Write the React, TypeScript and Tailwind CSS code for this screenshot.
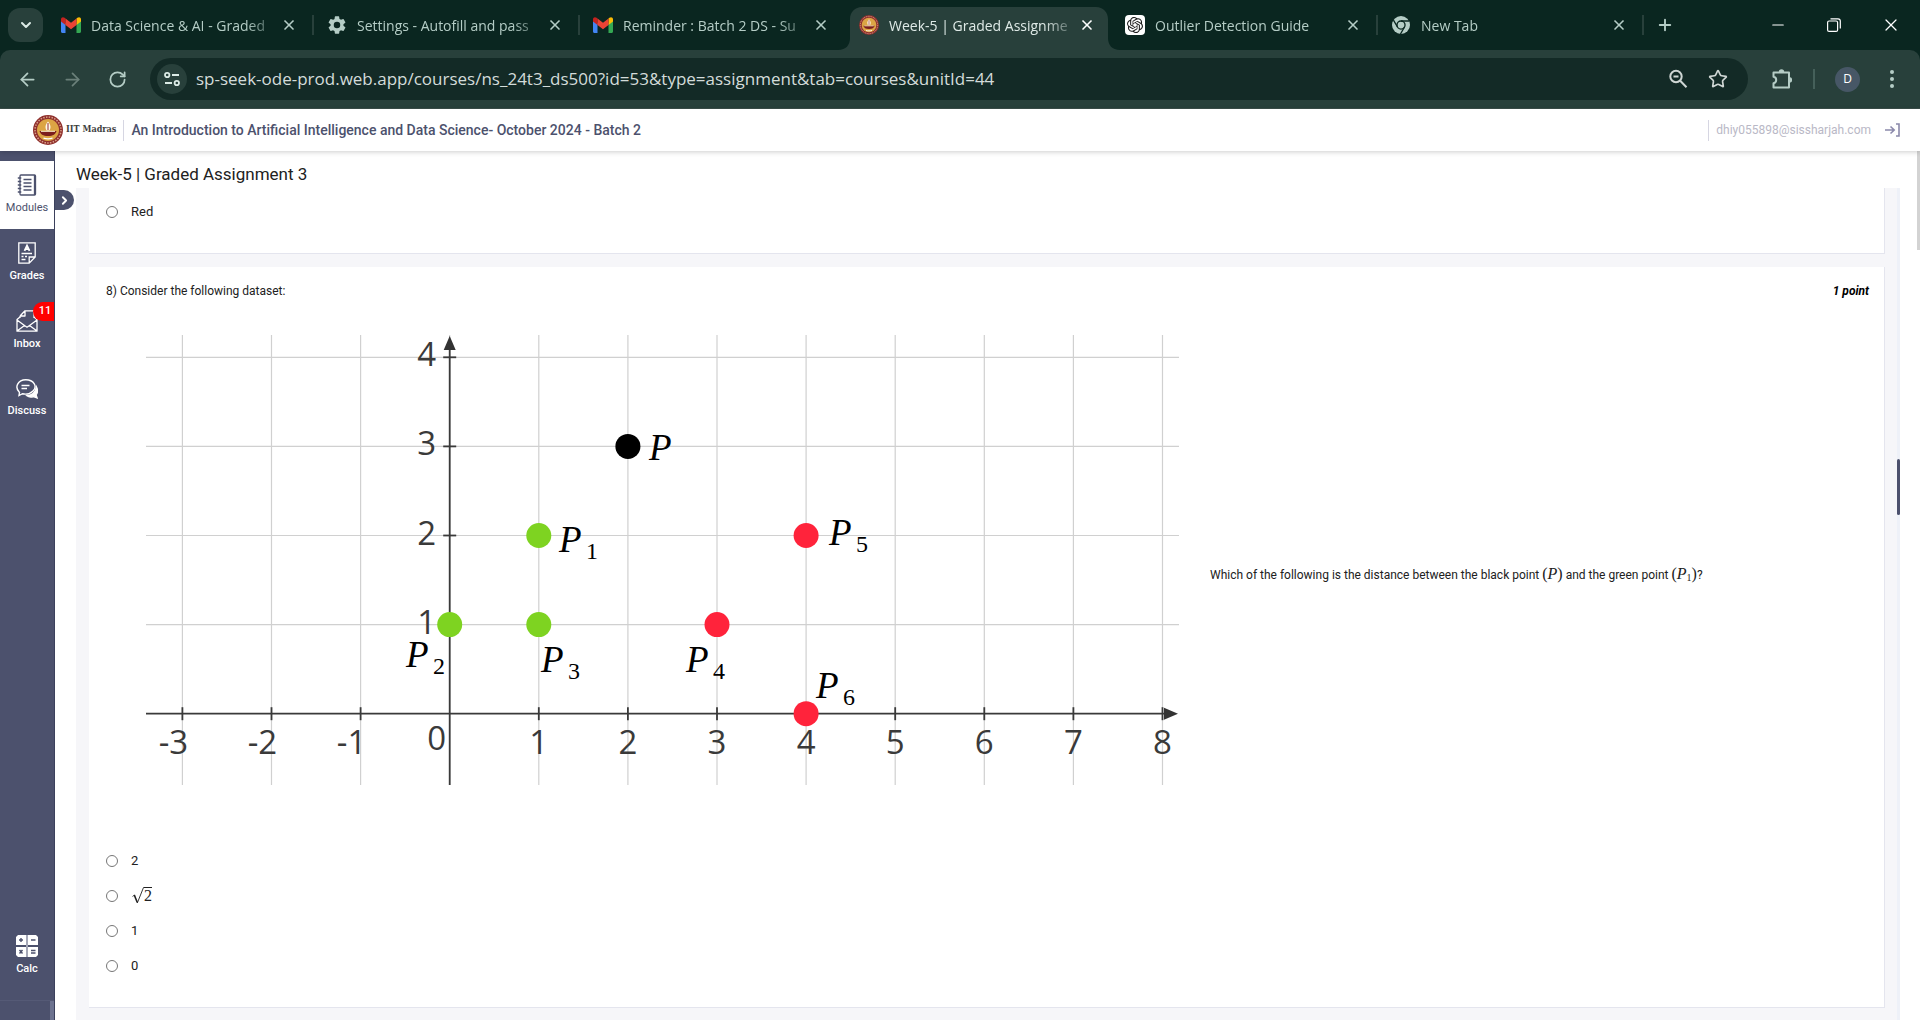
import { ReactNode } from 'react';
import { ArrowLeft, ArrowRight, ChevronDown, ChevronRight, Minus, Plus, RotateCw, Star, X } from 'lucide-react';
import { SiOpenai } from 'react-icons/si';

const GRID_X = [-3, -2, -1, 0, 1, 2, 3, 4, 5, 6, 7, 8];
const GRID_Y = [1, 2, 3, 4];
const UNIT = 89.1;

// plot units -> svg units
const px = (x: number) => 303.7 + x * UNIT;
const py = (y: number) => 379.7 - y * UNIT;

const POINTS = [
  { name: 'P', sub: '', x: 2, y: 3, color: '#000000', lx: 503, ly: 126 },
  { name: 'P', sub: '1', x: 1, y: 2, color: '#7ed321', lx: 413, ly: 218 },
  { name: 'P', sub: '2', x: 0, y: 1, color: '#7ed321', lx: 260, ly: 333 },
  { name: 'P', sub: '3', x: 1, y: 1, color: '#7ed321', lx: 395, ly: 338 },
  { name: 'P', sub: '4', x: 3, y: 1, color: '#ff233b', lx: 540, ly: 338 },
  { name: 'P', sub: '5', x: 4, y: 2, color: '#ff233b', lx: 683, ly: 211 },
  { name: 'P', sub: '6', x: 4, y: 0, color: '#ff233b', lx: 670, ly: 364 },
];

function GmailIcon() {
  return (
    <svg viewBox="0 0 20 16" className="h-4 w-5">
      <path d="M0 2v12.500c0 .8.6 1.500 1.500 1.500H4.500V6z" fill="#4285f4" />
      <path d="M20 2v12.500c0 .8-.6 1.500-1.500 1.500H15.500V6z" fill="#34a853" />
      <path d="M15.500 1.500V8L20 4.500V2.200C20 .2 17.800-.5 16.400.8z" fill="#fbbc04" />
      <path d="M4.500 1.500V8L0 4.500V2.200C0 .2 2.200-.5 3.600.8z" fill="#c5221f" />
      <path d="M4.500 8V1.500L10 5.800l5.500-4.300V8L10 12.200z" fill="#ea4335" />
    </svg>
  );
}

function GearIcon() {
  return (
    <svg viewBox="2 2 20 20" className="size-[18px]" fill="#b5cdc6">
      <path d="M19.140 12.940c.04-.3.060-.61.060-.94s-.02-.64-.07-.94l2.030-1.580a.49.49 0 0 0 .12-.61l-1.920-3.320a.49.49 0 0 0-.59-.22l-2.390.96a7 7 0 0 0-1.620-.94l-.36-2.540a.48.48 0 0 0-.48-.41h-3.840a.47.47 0 0 0-.47.41l-.36 2.540a7.300 7.300 0 0 0-1.620.94l-2.390-.96a.47.47 0 0 0-.59.22L2.740 8.870a.47.47 0 0 0 .12.61l2.030 1.580a6.500 6.500 0 0 0 0 1.880l-2.030 1.580a.49.49 0 0 0-.12.61l1.920 3.320c.12.22.37.29.59.22l2.390-.96c.5.380 1.030.7 1.620.94l.36 2.540c.05.24.24.41.48.41h3.840c.24 0 .44-.17.47-.41l.36-2.540a7 7 0 0 0 1.620-.94l2.390.96c.22.080.47 0 .59-.22l1.920-3.320a.47.47 0 0 0-.12-.61zM12 15.600a3.600 3.600 0 1 1 0-7.200 3.600 3.600 0 0 1 0 7.200z" />
    </svg>
  );
}

function ChromeIcon() {
  return (
    <svg viewBox="0 0 20 20" className="size-[18px]">
      <circle cx="10" cy="10" r="10" fill="#b5cdc6" />
      <circle cx="10" cy="10" r="4.500" fill="none" stroke="#0a2620" strokeWidth="1.500" />
      <path d="M10 5.500h9M6.100 12.200L1.600 4.500M13.900 12.200l-4.500 7.800" stroke="#0a2620" strokeWidth="1.500" />
    </svg>
  );
}

function CrestIcon({ className }: { className: string }) {
  return (
    <svg viewBox="0 0 30 30" className={className}>
      <circle cx="15" cy="15" r="15" fill="#8f2f2c" />
      <circle cx="15" cy="15" r="13" fill="none" stroke="#d8a08a" strokeWidth="1.500" strokeDasharray="1.500 1.300" />
      <circle cx="15" cy="15" r="11" fill="#dca544" />
      <path d="M15 6.500c1.800 2 2.500 4 2.500 5.500s-.6 2.500-1 3.500h-3c-.4-1-1-2-1-3.500s.7-3.500 2.500-5.500z" fill="#fff8ea" />
      <path d="M14.500 8h1v7h-1z" fill="#8f2f2c" />
      <path d="M6.500 16h17c-.7 3-3.500 5-8.500 5s-7.800-2-8.500-5z" fill="#7c1f1d" />
      <path d="M8 16.300h14" stroke="#f3e3c0" strokeWidth="1.200" />
      <path d="M10.500 23.200c3 .8 6 .8 9 0" stroke="#fff" strokeWidth="1.300" fill="none" />
    </svg>
  );
}

function OpenAiIcon() {
  return (
    <span className="flex size-5 items-center justify-center rounded bg-white text-[#1c1c1c]">
      <SiOpenai size={16} />
    </span>
  );
}

const TABS: { title: string; icon: ReactNode; active?: boolean }[] = [
  { title: 'Data Science & AI - Graded', icon: <GmailIcon /> },
  { title: 'Settings - Autofill and pass', icon: <GearIcon /> },
  { title: 'Reminder : Batch 2 DS - Su', icon: <GmailIcon /> },
  { title: 'Week-5 | Graded Assignme', icon: <CrestIcon className="size-5" />, active: true },
  { title: 'Outlier Detection Guide', icon: <OpenAiIcon /> },
  { title: 'New Tab', icon: <ChromeIcon /> },
];

function TabStrip() {
  return (
    <div className="flex h-[50px] items-center bg-[#0a2620] pl-2 font-['Open_Sans','Noto_Sans',sans-serif] text-[#b5cdc6]">
      <button aria-label="Search tabs" className="mr-[5px] flex h-[34px] w-[35px] shrink-0 items-center justify-center rounded-xl bg-[#28403b] text-[#dcebe6]">
        <ChevronDown size={16} strokeWidth={3} />
      </button>
      {TABS.map((tab, i) => (
        <div key={tab.title} className="relative h-[50px] w-[266px] min-w-0">
          {tab.active && (
            <svg viewBox="0 0 282 43" preserveAspectRatio="none" className="absolute -left-2 bottom-0 h-[43px] w-[282px]" fill="#28403b">
              <path d="M0 43c8 0 12-5 12-12V12C12 5 17 0 24 0h234c7 0 12 5 12 12v19c0 7 4 12 12 12z" />
            </svg>
          )}
          <div className="relative flex h-full items-center pr-[17px] pl-[13px]">
            <span className="flex w-5 shrink-0 justify-center">{tab.icon}</span>
            <span
              className={
                'ml-[10px] flex-1 overflow-hidden text-[14px] whitespace-nowrap [mask-image:linear-gradient(to_right,black_155px,transparent_190px)] ' +
                (tab.active ? 'text-[#dfeae7]' : '')
              }
            >
              {tab.title}
            </span>
            <button aria-label="Close tab" className={'ml-3 shrink-0 ' + (tab.active ? 'text-white' : '')}>
              <X size={16} strokeWidth={2.5} />
            </button>
          </div>
          {i !== 2 && i !== 3 && <span className="absolute top-[15px] right-0 h-5 w-0.5 bg-[#28403b]" />}
        </div>
      ))}
      <button aria-label="New tab" className="ml-3 shrink-0">
        <Plus size={18} strokeWidth={2.5} />
      </button>
      <div className="ml-auto flex shrink-0 items-center text-white">
        <button aria-label="Minimize" className="flex w-14 justify-center">
          <Minus size={18} strokeWidth={1.5} />
        </button>
        <button aria-label="Restore" className="flex w-14 justify-center">
          <svg viewBox="0 0 14 14" className="size-[14px]" fill="none" stroke="currentColor" strokeWidth="1.200">
            <rect x="0.600" y="3" width="10" height="10.400" rx="1.500" />
            <path d="M3.500 .8h7.500c1.400 0 2.300 1 2.300 2.300v7.500" />
          </svg>
        </button>
        <button aria-label="Close" className="flex w-[58px] justify-center">
          <X size={20} strokeWidth={1.5} />
        </button>
      </div>
    </div>
  );
}

function Toolbar() {
  return (
    <div className="bg-[#0a2620]">
      <div className="flex h-[59px] items-center rounded-t-[10px] border-b border-[#3c4f4b] bg-[#28403b] font-['Open_Sans','Noto_Sans',sans-serif] text-[#b5cdc6]">
        <button aria-label="Back" className="ml-[17px]">
          <ArrowLeft size={21} strokeWidth={2} />
        </button>
        <button aria-label="Forward" className="ml-6 text-[#6b807a]">
          <ArrowRight size={21} strokeWidth={2} />
        </button>
        <button aria-label="Reload" className="ml-[25px]">
          <RotateCw size={19} strokeWidth={2.2} />
        </button>
        <div className="ml-[23px] flex h-[42px] min-w-0 flex-1 items-center rounded-full bg-[#132a26] pl-[7px]">
          <button aria-label="Site information" className="flex size-[30px] shrink-0 items-center justify-center rounded-full bg-[#28403b]">
            <svg viewBox="0 0 16 16" className="size-4" fill="none" stroke="#dcebe6" strokeWidth="1.800">
              <circle cx="3.200" cy="4" r="2.200" />
              <path d="M8 4h7M1 12h7" />
              <circle cx="12.800" cy="12" r="2.200" />
            </svg>
          </button>
          <input
            aria-label="Address"
            className="ml-[9px] h-6 min-w-0 flex-1 bg-transparent text-[17px] leading-6 text-[#d3dcda] outline-none"
            defaultValue="sp-seek-ode-prod.web.app/courses/ns_24t3_ds500?id=53&type=assignment&tab=courses&unitId=44"
          />
          <button aria-label="Zoom" className="mr-5 text-[#cfd6d4]">
            <svg viewBox="0 0 20 20" className="size-5" fill="none" stroke="currentColor" strokeWidth="2">
              <circle cx="8" cy="7.500" r="5.700" />
              <path d="M12.200 11.700l6.300 6.600M5.500 7.500h5" />
            </svg>
          </button>
          <button aria-label="Bookmark" className="mr-5 text-[#cfd6d4]">
            <Star size={20} strokeWidth={2} strokeLinejoin="miter" />
          </button>
        </div>
        <button aria-label="Extensions" className="ml-6">
          <svg viewBox="0 0 20 20" className="size-5" fill="none" stroke="currentColor" strokeWidth="2" strokeLinejoin="round">
            <path d="M1.500 3.500H17V18.500H1.500V14.200c3.600-.6 3.600-5.800 0-6.400z" />
            <path d="M6.800 3a2.700 2.700 0 0 1 5.400 0zM17.500 8.300a2.700 2.700 0 0 1 0 5.400z" fill="currentColor" stroke="none" />
          </svg>
        </button>
        <span className="mr-5 ml-[21px] h-5 w-0.5 bg-[#45605a]" />
        <button aria-label="Profile" className="flex size-[25px] items-center justify-center rounded-full bg-[#475766] text-xs text-white">
          D
        </button>
        <button aria-label="Menu" className="mr-[18px] ml-[22px]">
          <svg viewBox="0 0 20 20" className="size-5" fill="currentColor">
            <circle cx="10" cy="3" r="2" />
            <circle cx="10" cy="10" r="2" />
            <circle cx="10" cy="17" r="2" />
          </svg>
        </button>
      </div>
    </div>
  );
}

function SiteHeader() {
  return (
    <header className="relative z-10 flex h-[42px] items-center bg-white pr-5 pl-[33px] shadow-[0_1px_5px_rgba(0,0,0,0.2)]">
      <CrestIcon className="size-[30px]" />
      <span className="ml-[3px] font-['DejaVu_Serif_Condensed','DejaVu_Serif',serif] text-[9px] font-bold text-[#3f3f3f]">IIT Madras</span>
      <span className="mx-[7px] h-[21px] w-px bg-[#d6d6e2]" />
      <h1 className="text-sm font-medium text-[#4c516d]">An Introduction to Artificial Intelligence and Data Science- October 2024 - Batch 2</h1>
      <span className="mr-[7px] ml-auto h-[21px] w-px bg-[#d6d6e2]" />
      <span className="text-xs text-[#b9b8c6]">dhiy055898@sissharjah.com</span>
      <button aria-label="Log out" className="ml-[14px]">
        <svg viewBox="0 0 15 14" className="h-[14px] w-[15px]" fill="none" stroke="#8b89ab" strokeWidth="1.600">
          <path d="M0 7h9M5.500 3.500L9.200 7l-3.700 3.500M11 1h3v12h-3" />
        </svg>
      </button>
    </header>
  );
}

function NavItem({ label, badge, active, children }: { label: string; badge?: string; active?: boolean; children: ReactNode }) {
  return (
    <a
      href="#"
      className={
        'relative flex h-[68px] w-[54px] flex-col items-center justify-center gap-1 text-[11px] leading-4 ' +
        (active ? 'bg-white text-[#4c516d]' : 'font-medium text-white')
      }
    >
      {children}
      {label}
      {badge && (
        <span className="absolute top-[5px] right-0 h-[19px] w-[21px] rounded-l-full bg-[#ff0000] pl-[3px] text-center text-[11px] leading-[18px]">{badge}</span>
      )}
    </a>
  );
}

function Sidebar() {
  return (
    <nav className="flex w-[55px] shrink-0 flex-col border-r border-[#3b405c] bg-[#4c516d] pt-[10px]">
      <NavItem label="Modules" active>
        <svg viewBox="0 0 20 22" className="h-[22px] w-5" fill="none" stroke="#4c516d" strokeWidth="1.300">
          <rect x="3" y="1" width="15.500" height="20" rx="1" />
          <path d="M17.500 1v20M6.500 5.500h8M6.500 9h8M6.500 12.500h8M6.500 16h8M.8 4h3.500M.8 7.500h3.500M.8 11h3.500M.8 14.500h3.500M.8 18h3.500" />
        </svg>
      </NavItem>
      <NavItem label="Grades">
        <svg viewBox="0 0 18 22" className="h-[22px] w-[18px]" fill="none" stroke="currentColor" strokeWidth="1.300">
          <path d="M.8.8h16.400V15l-6 6.200H.8zM17 15h-5.800v6M3.500 11.500h10.500M3.500 14.500h2M7 14.500h2M3.500 17.500h4" />
          <path d="M6.500 8.800L9 3.500l2.500 5.300M7.300 7.200h3.400" strokeWidth="1.800" />
        </svg>
      </NavItem>
      <NavItem label="Inbox" badge="11">
        <svg viewBox="0 0 22 22" className="size-[22px]" fill="none" stroke="currentColor" strokeWidth="1.300" strokeLinejoin="round">
          <path d="M4 6L9 .8h9V8M4 6h5V.8M4 6v2M4 7L1 9.500v11.700h20V9.500L18 7M1 10l7.500 5.500L1 21M21 10l-7.500 5.500L21 21M8.500 15.500L11 17.200l2.500-1.700" />
        </svg>
      </NavItem>
      <NavItem label="Discuss">
        <svg viewBox="0 0 22 20" className="h-5 w-[22px]" fill="none" stroke="currentColor" strokeWidth="1.400">
          <path d="M3.500 13.500C-2 8 2 .8 9.800.8s12 6.500 7.200 11.200c-3 2.900-7.500 3.500-10.500 2.700L3 16.500z" />
          <path d="M5.500 6.500h8M5.500 9.500h5.500" />
          <path d="M20.500 8c1.500 3 1 6-.5 7.800l1 3-3.500-1.200c-2.500.8-5 .4-6.500-.8 4.500-.3 8.500-3.300 9.500-8.800z" fill="currentColor" />
        </svg>
      </NavItem>
      <div className="mt-auto mb-[10px]">
        <NavItem label="Calc">
          <svg viewBox="0 0 22 22" className="size-[22px]">
            <path d="M2 0h8v10H0V2zM12 0h8l2 2v8H12zM0 12h10v10H2l-2-2zM12 12h10v8l-2 2h-8z" fill="#fff" />
            <path d="M10 0h2v22h-2z" fill="#a5a8b8" />
            <path d="M3 5h4M5 3v4M15 5h4.500M3.500 15l3 3.500M6.500 15l-3 3.500M15 15.500h4.500M15 18h4.500" stroke="#4c516d" strokeWidth="1.400" />
          </svg>
        </NavItem>
      </div>
      <div className="flex h-5 justify-end border-t border-[#555a76]">
        <span className="w-1 bg-[#6d7390]" />
      </div>
    </nav>
  );
}

function DatasetPlot() {
  return (
    <svg viewBox="0 0 1034 452" className="w-[1034px] max-w-full shrink" role="img" aria-label="Dataset">
      <g stroke="#d0d0d0" strokeWidth="1.200">
        {GRID_X.map((x) => (
          <line key={x} x1={px(x)} x2={px(x)} y1="1" y2="451" />
        ))}
        {GRID_Y.map((y) => (
          <line key={y} x1="0" x2="1033" y1={py(y)} y2={py(y)} />
        ))}
      </g>
      <g stroke="#3a3a3a" strokeWidth="1.800">
        <line x1={px(0)} x2={px(0)} y1="8" y2="451" />
        <line x1="0" x2="1024" y1={py(0)} y2={py(0)} />
        {GRID_X.filter((x) => x !== 0).map((x) => (
          <line key={x} x1={px(x)} x2={px(x)} y1={py(0) - 6.5} y2={py(0) + 6.5} />
        ))}
        {GRID_Y.map((y) => (
          <line key={y} x1={px(0) - 6.5} x2={px(0) + 6.5} y1={py(y)} y2={py(y)} />
        ))}
      </g>
      <path d="M303.700 2l6 14h-12zM1032 379.700l-14 6v-12z" fill="#333333" />
      <g fill="#3a3a3a" className="font-['Open_Sans','Noto_Sans',sans-serif] text-[33px]">
        {GRID_X.map((x) => (
          <text key={x} x={x < 0 ? px(x) - 9 : x === 0 ? px(0) - 13 : px(x)} y={x === 0 ? 416 : 420} textAnchor="middle">
            {x}
          </text>
        ))}
        {GRID_Y.map((y) => (
          <text key={y} x="290" y={py(y) + 9} textAnchor="end">
            {y}
          </text>
        ))}
      </g>
      {POINTS.map((p) => (
        <g key={p.name + p.sub} className="font-['Liberation_Serif',serif]">
          <circle cx={px(p.x)} cy={py(p.y)} r="12.500" fill={p.color} />
          <text x={p.lx} y={p.ly} className="text-[37px] italic">
            {p.name}
          </text>
          {p.sub && (
            <text x={p.lx + 27} y={p.ly + 7} className="text-[24px]">
              {p.sub}
            </text>
          )}
        </g>
      ))}
    </svg>
  );
}

function Option({ name, value, children }: { name: string; value: string; children: ReactNode }) {
  return (
    <label className="flex h-[35px] items-center text-[13px]">
      <input type="radio" name={name} value={value} className="mr-[13px] size-3 appearance-none rounded-full border border-[#767676] bg-white" />
      {children}
    </label>
  );
}

function SquareRootTwo() {
  return (
    <span className="flex items-center font-['Liberation_Serif',serif] text-base leading-4" aria-label="square root of 2">
      <svg viewBox="0 0 12 17" className="ml-px h-[17px] w-3" fill="none" stroke="currentColor">
        <path d="M.5 9.500l2-1.500" strokeWidth="0.800" />
        <path d="M2.300 8l3 7.500" strokeWidth="1.600" />
        <path d="M5.300 16L11.500.5h.5" strokeWidth="0.900" />
      </svg>
      <span className="border-t border-current">2</span>
    </span>
  );
}

export default function App() {
  return (
    <div className="flex h-screen flex-col overflow-hidden bg-white font-['Roboto',sans-serif] text-[#212121]">
      <TabStrip />
      <Toolbar />
      <SiteHeader />
      <div className="flex min-h-0 flex-1">
        <Sidebar />
        <div className="relative w-0">
          <button aria-label="Expand" className="absolute top-[39px] left-0 flex h-5 w-[19px] items-center justify-center rounded-r-full bg-[#4c516d] text-white">
            <ChevronRight size={13} strokeWidth={3.5} />
          </button>
        </div>
        <main className="flex min-w-0 flex-1 flex-col pl-[21px]">
          <h2 className="h-[37px] pt-[9px] text-[17px] leading-7">Week-5 | Graded Assignment 3</h2>
          <div className="flex min-h-0 flex-1">
            <div className="flex min-w-0 flex-1 flex-col gap-[13px] overflow-hidden bg-[#f6f6f9] pr-3 pl-[13px]">
              <section className="h-[66px] shrink-0 border-r border-b border-[#e4e5ee] bg-white pt-[6px] pl-[17px]">
                <Option name="q7" value="red">Red</Option>
              </section>
              <section className="shrink-0 border-r border-b border-[#e4e5ee] bg-white pr-[15px] pb-6 pl-[17px]">
                <div className="flex h-[47px] items-center justify-between text-xs">
                  <p>8) Consider the following dataset:</p>
                  <p className="font-bold text-black italic">1 point</p>
                </div>
                <div className="flex items-center gap-[30px] py-5 pl-10">
                  <DatasetPlot />
                  <p className="mt-7 text-xs whitespace-nowrap">
                    Which of the following is the distance between the black point{' '}
                    <span className="font-['Liberation_Serif',serif] text-base leading-4">
                      (<i>P</i>)
                    </span>{' '}
                    and the green point{' '}
                    <span className="font-['Liberation_Serif',serif] text-base leading-4">
                      (<i>P</i>
                      <sub className="text-[10px]">1</sub>)
                    </span>
                    ?
                  </p>
                </div>
                <div className="pt-[37px]">
                  <Option name="q8" value="2">2</Option>
                  <Option name="q8" value="sqrt2">
                    <SquareRootTwo />
                  </Option>
                  <Option name="q8" value="1">1</Option>
                  <Option name="q8" value="0">0</Option>
                </div>
              </section>
            </div>
            <div className="w-[3px] bg-[#eef1f8] pt-[271px]">
              <div className="h-14 rounded-full bg-[#4c516d]" />
            </div>
          </div>
        </main>
        <div className="w-5">
          <div className="ml-auto h-[99px] w-[3px] bg-[#d3d3d3]" />
        </div>
      </div>
    </div>
  );
}
